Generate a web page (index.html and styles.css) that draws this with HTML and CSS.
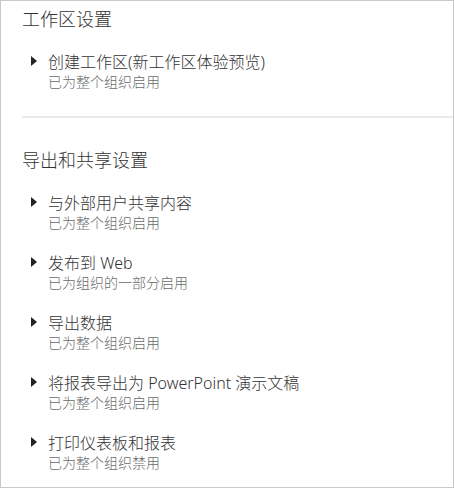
FILE: index.html
```html
<!DOCTYPE html>
<html lang="zh-CN">
<head>
<meta charset="utf-8">
<link rel="stylesheet" href="styles.css">
</head>
<body>
<div class="panel">
  <section class="section">
    <h2 class="heading">工作区设置</h2>
    <ul class="items">
      <li class="item">
        <span class="caret"></span>
        <div class="text">
          <div class="title">创建工作区(新工作区体验预览)</div>
          <div class="sub">已为整个组织启用</div>
        </div>
      </li>
    </ul>
  </section>
  <hr class="divider">
  <section class="section second">
    <h2 class="heading">导出和共享设置</h2>
    <ul class="items">
      <li class="item">
        <span class="caret"></span>
        <div class="text">
          <div class="title">与外部用户共享内容</div>
          <div class="sub">已为整个组织启用</div>
        </div>
      </li>
      <li class="item">
        <span class="caret"></span>
        <div class="text">
          <div class="title">发布到 Web</div>
          <div class="sub">已为组织的一部分启用</div>
        </div>
      </li>
      <li class="item">
        <span class="caret"></span>
        <div class="text">
          <div class="title">导出数据</div>
          <div class="sub">已为整个组织启用</div>
        </div>
      </li>
      <li class="item">
        <span class="caret"></span>
        <div class="text">
          <div class="title">将报表导出为 PowerPoint 演示文稿</div>
          <div class="sub">已为整个组织启用</div>
        </div>
      </li>
      <li class="item">
        <span class="caret"></span>
        <div class="text">
          <div class="title">打印仪表板和报表</div>
          <div class="sub">已为整个组织禁用</div>
        </div>
      </li>
    </ul>
  </section>
</div>
</body>
</html>
```
FILE: styles.css
```css
* { box-sizing: border-box; }
html, body { margin: 0; padding: 0; background: #fff; }
body {
  font-family: "Noto Sans", "Noto Sans CJK SC", sans-serif;
  font-weight: 300;
  color: #333;
}
.panel {
  width: 454px;
  height: 488px;
  border: 1px solid #c8c8c8;
  padding: 6px 0 0 21px;
  overflow: hidden;
}
.heading {
  margin: 0;
  font-size: 18px;
  line-height: 24px;
  font-weight: 300;
  color: #333;
}
.items {
  list-style: none;
  margin: 21px 0 0 0;
  padding: 0;
  display: flex;
  flex-direction: column;
  gap: 20px;
}
.item {
  display: flex;
  align-items: flex-start;
}
.caret {
  width: 0;
  height: 0;
  border-top: 5px solid transparent;
  border-bottom: 5px solid transparent;
  border-left: 6px solid #252423;
  margin: 4px 0 0 9px;
}
.text {
  margin-left: 11px;
}
.title {
  font-size: 16px;
  line-height: 20px;
  color: #333;
}
.sub {
  font-size: 14px;
  line-height: 20px;
  color: #6a6a6a;
}
.divider {
  border: 0;
  height: 2px;
  background: #eaeaea;
  margin: 24px 0 0 0;
}
.second { margin-top: 30px; }
```
